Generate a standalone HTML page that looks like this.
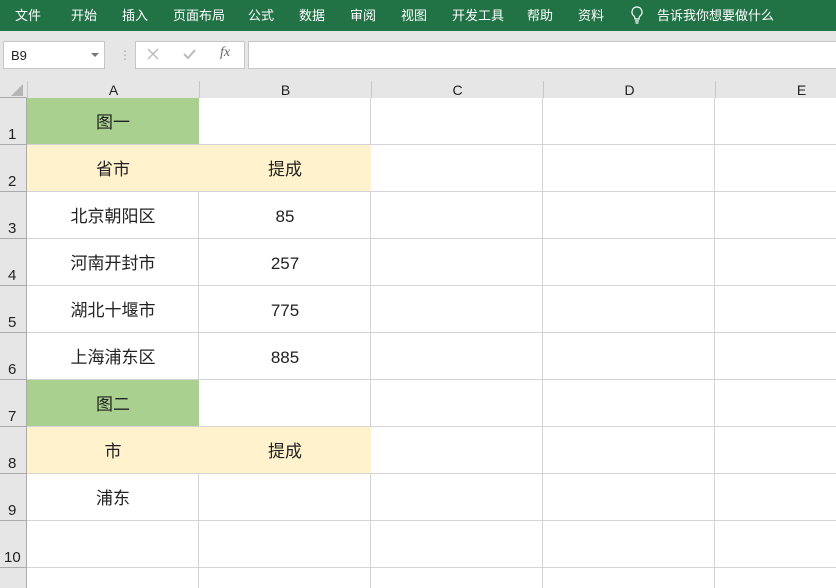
<!DOCTYPE html>
<html><head><meta charset="utf-8"><style>
*{margin:0;padding:0;box-sizing:border-box}
body{width:836px;height:588px;overflow:hidden;background:#fff;font-family:"Liberation Sans","Noto Sans CJK SC",sans-serif;position:relative}
.a{position:absolute}
.menu{left:0;top:0;width:836px;height:31px;background:#217346;color:#fff;font-size:13px}
.menu span{position:absolute;top:5px}
.tb{left:0;top:31px;width:836px;height:48px;background:#e6e6e6}
.box{background:#fff;border:1px solid #c6c6c6}
.hdr{background:#e6e6e6;color:#222;font-size:14px;text-align:center}
.c{font-size:17px;color:#222;text-align:center;line-height:46px;padding-top:2px}
.rn{font-size:15px;color:#222;left:8px}
</style></head><body>
<div class="a menu">
<span style="left:15px">文件</span><span style="left:71px">开始</span><span style="left:122px">插入</span><span style="left:173px">页面布局</span><span style="left:248px">公式</span><span style="left:299px">数据</span><span style="left:350px">审阅</span><span style="left:401px">视图</span><span style="left:452px">开发工具</span><span style="left:527px">帮助</span><span style="left:578px">资料</span>
<svg class="a" style="left:631px;top:6px" width="12" height="18" viewBox="0 0 12 18"><path d="M6 1a5 5 0 0 0-3 9c1 1 1 2 1 3h4c0-1 0-2 1-3a5 5 0 0 0-3-9zM4 15h4M4.5 17h3" fill="none" stroke="#fff" stroke-width="1.2"/></svg>
<span style="left:657px">告诉我你想要做什么</span>
</div>
<div class="a tb"></div>
<div class="a box" style="left:3px;top:41px;width:102px;height:28px;font-size:13px;padding:6px 0 0 7px;color:#222">B9</div>
<div class="a" style="left:91px;top:53px;border-left:4px solid transparent;border-right:4px solid transparent;border-top:4px solid #777"></div>
<div class="a" style="left:119px;top:48px;color:#aaa;font-size:12px">⋮</div>
<div class="a box" style="left:135px;top:41px;width:110px;height:28px"></div>
<svg class="a" style="left:147px;top:48px" width="60" height="14"><path d="M1 1L11 11M11 1L1 11" stroke="#bbb" stroke-width="1.4"/><path d="M37 6L41 10L48 2" fill="none" stroke="#bbb" stroke-width="2"/></svg>
<div class="a" style="left:220px;top:45px;color:#666;font-size:14px;font-style:italic;font-family:'Liberation Serif',serif">fx</div>
<div class="a box" style="left:248px;top:41px;width:600px;height:28px"></div>
<div class="a hdr" style="left:0;top:79px;width:836px;height:19px;border-bottom:1px solid #ababab"></div>
<svg class="a" style="left:10px;top:84px" width="14" height="12"><path d="M13 0V12H1Z" fill="#b5b5b5"/></svg>
<div class="a hdr" style="left:27px;top:81px;width:172px;border-left:1px solid #c6c6c6;line-height:16px;padding-top:1px">A</div>
<div class="a hdr" style="left:199px;top:81px;width:172px;border-left:1px solid #c6c6c6;line-height:16px;padding-top:1px">B</div>
<div class="a hdr" style="left:371px;top:81px;width:172px;border-left:1px solid #c6c6c6;line-height:16px;padding-top:1px">C</div>
<div class="a hdr" style="left:543px;top:81px;width:172px;border-left:1px solid #c6c6c6;line-height:16px;padding-top:1px">D</div>
<div class="a hdr" style="left:715px;top:81px;width:172px;border-left:1px solid #c6c6c6;line-height:16px;padding-top:1px">E</div>
<div class="a" style="left:0;top:98px;width:27px;height:490px;background:#e6e6e6;border-right:1px solid #ababab"></div>
<svg class="a" style="left:0;top:98px" width="836" height="490">
<g stroke="#d4d4d4" stroke-width="1">
<path d="M198.5 0V490M370.5 0V490M542.5 0V490M714.5 0V490"/>
<path d="M27 46.5H836M27 93.5H836M27 140.5H836M27 187.5H836M27 234.5H836M27 281.5H836M27 328.5H836M27 375.5H836M27 422.5H836M27 469.5H836"/>
</g>
<g stroke="#ababab"><path d="M0 46.5H26M0 93.5H26M0 140.5H26M0 187.5H26M0 234.5H26M0 281.5H26M0 328.5H26M0 375.5H26M0 422.5H26M0 469.5H26"/></g>
</svg>
<div class="a" style="left:27px;top:98px;width:172px;height:46px;background:#a9d08e"></div>
<div class="a" style="left:27px;top:145px;width:344px;height:46px;background:#fff2cc"></div>
<div class="a" style="left:27px;top:380px;width:172px;height:46px;background:#a9d08e"></div>
<div class="a" style="left:27px;top:427px;width:344px;height:46px;background:#fff2cc"></div>
<div class="a rn" style="top:126px">1</div><div class="a rn" style="top:173px">2</div><div class="a rn" style="top:220px">3</div><div class="a rn" style="top:267px">4</div><div class="a rn" style="top:314px">5</div><div class="a rn" style="top:361px">6</div><div class="a rn" style="top:408px">7</div><div class="a rn" style="top:455px">8</div><div class="a rn" style="top:502px">9</div><div class="a rn" style="left:4px;top:549px">10</div>
<div class="a c" style="left:27px;top:98px;width:172px">图一</div>
<div class="a c" style="left:27px;top:145px;width:172px">省市</div><div class="a c" style="left:199px;top:145px;width:172px">提成</div>
<div class="a c" style="left:27px;top:192px;width:172px">北京朝阳区</div><div class="a c" style="left:199px;top:192px;width:172px">85</div>
<div class="a c" style="left:27px;top:239px;width:172px">河南开封市</div><div class="a c" style="left:199px;top:239px;width:172px">257</div>
<div class="a c" style="left:27px;top:286px;width:172px">湖北十堰市</div><div class="a c" style="left:199px;top:286px;width:172px">775</div>
<div class="a c" style="left:27px;top:333px;width:172px">上海浦东区</div><div class="a c" style="left:199px;top:333px;width:172px">885</div>
<div class="a c" style="left:27px;top:380px;width:172px">图二</div>
<div class="a c" style="left:27px;top:427px;width:172px">市</div><div class="a c" style="left:199px;top:427px;width:172px">提成</div>
<div class="a c" style="left:27px;top:474px;width:172px">浦东</div>
</body></html>
